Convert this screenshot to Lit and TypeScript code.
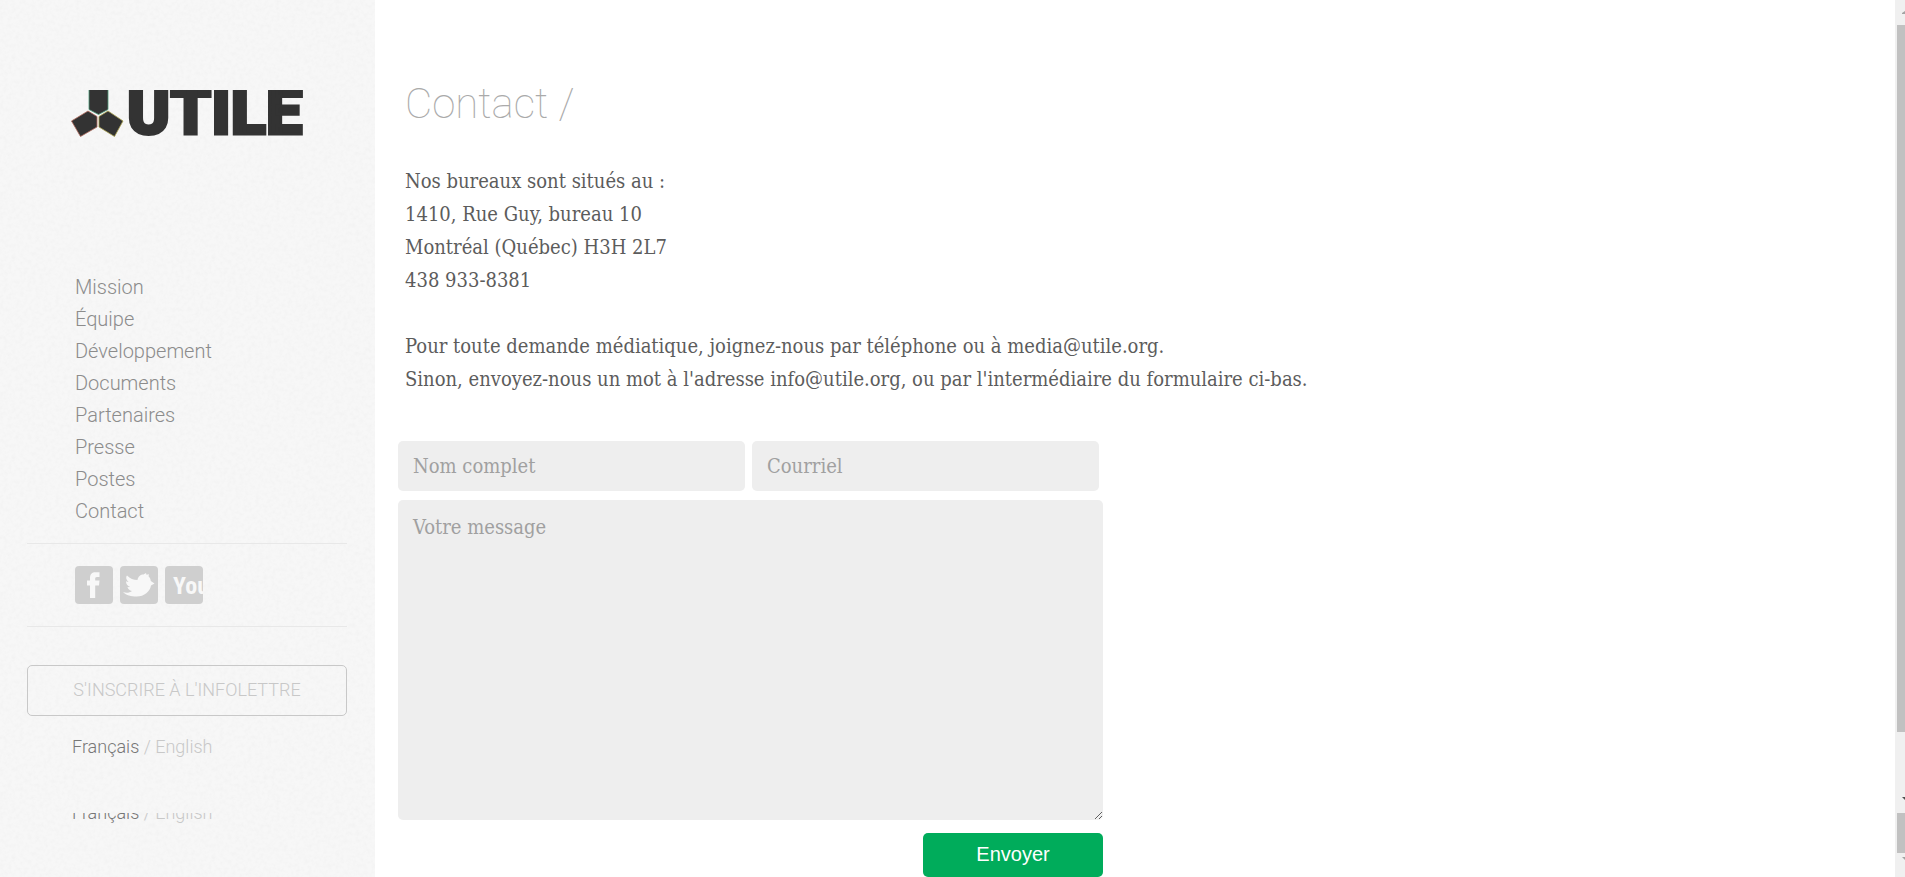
import { LitElement, html, css, svg } from "lit";
import { customElement } from "lit/decorators.js";

const MENU = ["Mission", "Équipe", "Développement", "Documents", "Partenaires", "Presse", "Postes", "Contact"];

@customElement("utile-logo")
class UtileLogo extends LitElement {
  static styles = css`
    :host { display: block; }
    .logo { display: block; width: 232px; height: 48px; overflow: hidden; }
    .word { font: 900 65px Roboto, sans-serif; fill: #333; stroke: #333; stroke-width: 3px; }
  `;
  render() {
    return html`<svg class="logo" viewBox="0 0 232 48" role="img" aria-label="UTILE">
      <path d="M18 -2H37V19.500L27.500 24.500L18 19.500Z" fill="#333" stroke="#4f9a78" stroke-width=".8" />
      <path d="M17 21L26 26.500V37L9.500 46.500L.5 31Z" fill="#333" stroke="#b0695c" stroke-width=".8" />
      <path d="M37 21L28 26.500V37L43.500 46.500L52 31Z" fill="#333" stroke="#a8a04e" stroke-width=".8" />
      <text class="word" x="56" y="44">UTILE</text>
    </svg>`;
  }
}

@customElement("social-links")
class SocialLinks extends LitElement {
  static styles = css`
    :host { display: flex; gap: 7px; }
    .link { display: block; width: 38px; height: 38px; border-radius: 4px; background: #cfcfcf; overflow: hidden; }
    .icon { display: block; width: 38px; height: 38px; fill: #f8f8f8; }
    .you { font: bold 24px "Liberation Sans Narrow", "Roboto Condensed", sans-serif; }
  `;
  render() {
    const items = [
      { name: "Facebook", art: svg`<path d="M15 32V19.500H12V14.500H15V12C15 8 17 6.200 20.500 6.200H24.500V11H22C20.500 11 20.200 11.700 20.200 12.800V14.500H24.500L24 19.500H20.200V32Z" />` },
      { name: "Twitter", art: svg`<path d="M3 26C6 27.200 9.500 27 12 25C9.500 24.500 8 23 7.500 21C8.500 21.200 9.500 21.200 10.200 21C7.500 20 6 18 6 15.300C7 15.800 7.700 16 8.600 16C6 14 5.500 11 7 9.500C10 12.500 13.500 14 17.500 14C18 10.500 20.500 8.500 23.500 8.500L26 7L26.500 8.800L29 8.300L28.500 10.200C29.800 11.300 30.500 13 30.800 15L34.500 17.500L31 19.500C30 25.500 24.500 30.500 16.500 30.500C11 30.500 6.500 29.500 3 26Z" />` },
      { name: "YouTube", art: svg`<text class="you" x="8" y="28">You</text>` },
    ];
    return items.map((i) => html`<a class="link" href="#" aria-label=${i.name}><svg class="icon" viewBox="0 0 38 38">${i.art}</svg></a>`);
  }
}

@customElement("language-switch")
class LanguageSwitch extends LitElement {
  static styles = css`
    :host { display: block; font: 300 18px/24px Roboto, sans-serif; color: #c8c8c8; }
    .lang { color: inherit; text-decoration: none; }
    .current { color: #777; }
  `;
  render() {
    return html`<a class="lang current" href="#">Français</a> / <a class="lang" href="#">English</a>`;
  }
}

@customElement("side-bar")
class SideBar extends LitElement {
  static styles = css`
    :host {
      display: flex; flex-direction: column; box-sizing: border-box; padding: 90px 28px 0 27px;
      background: #f7f7f7 url("data:image/svg+xml,%3Csvg xmlns='http://www.w3.org/2000/svg' width='200' height='200'%3E%3Cfilter id='n'%3E%3CfeTurbulence type='fractalNoise' baseFrequency='.25' numOctaves='2' stitchTiles='stitch'/%3E%3CfeColorMatrix values='0 0 0 0 .5 0 0 0 0 .5 0 0 0 0 .5 .12 0 0 0 -.045'/%3E%3C/filter%3E%3Crect width='200' height='200' filter='url(%23n)'/%3E%3C/svg%3E");
    }
    .brand { margin: 0 0 133px 44px; }
    .menu { list-style: none; margin: 0; padding: 0 48px 16px; font: 300 20px/32px Roboto, sans-serif; }
    .item { color: #8c8c8c; text-decoration: none; }
    .social { border: solid #e8e8e8; border-width: 1px 0; padding: 22px 48px; margin-bottom: 38px; }
    .news {
      box-sizing: border-box; width: 100%; height: 51px; border: 1px solid #c8c8c8; border-radius: 5px;
      background: none; color: #c8c8c8; font: 300 18px/24px Roboto, sans-serif; padding: 0 0 2px; white-space: nowrap;
    }
    .lang { margin: 19px 45px 0; }
    .echo { display: flex; align-items: flex-end; height: 12px; margin: 54px 45px 0; overflow: hidden; }
  `;
  render() {
    return html`
      <utile-logo class="brand"></utile-logo>
      <ul class="menu">${MENU.map((m) => html`<li><a class="item" href="#">${m}</a></li>`)}</ul>
      <div class="social"><social-links></social-links></div>
      <button class="news" type="button">S'INSCRIRE À L'INFOLETTRE</button>
      <language-switch class="lang"></language-switch>
      <div class="echo"><language-switch></language-switch></div>
    `;
  }
}

@customElement("contact-form")
class ContactForm extends LitElement {
  static styles = css`
    :host { display: block; max-width: 705px; }
    .form { display: flex; flex-direction: column; gap: 9px; }
    .row { display: grid; grid-template-columns: 1fr 1fr; gap: 7px; padding-right: 4px; }
    .field {
      box-sizing: border-box; width: 100%; height: 50px; border: 0; border-radius: 5px; margin: 0; padding: 0 15px;
      background: #eee; color: #444; font: 20px/27px "DejaVu Serif Condensed", "DejaVu Serif", serif;
    }
    .area { display: block; height: 320px; padding: 14px 15px; resize: both; }
    .field::placeholder { color: #a0a0a0; opacity: 1; }
    .send {
      align-self: flex-end; width: 180px; height: 44px; margin-top: 4px; border: 0; border-radius: 5px; padding: 0 0 2px;
      background: #00ac5b; color: #fff; font: 20px "Liberation Sans", Arial, sans-serif;
    }
  `;
  render() {
    return html`<form class="form">
      <div class="row">
        <input class="field" type="text" placeholder="Nom complet" aria-label="Nom complet" />
        <input class="field" type="email" placeholder="Courriel" aria-label="Courriel" />
      </div>
      <textarea class="field area" placeholder="Votre message" aria-label="Votre message"></textarea>
      <button class="send" type="button">Envoyer</button>
    </form>`;
  }
}

@customElement("scroll-rail")
class ScrollRail extends LitElement {
  static styles = css`
    :host { display: flex; flex-direction: column; align-items: flex-end; background: #f0f0f0; }
    .thumb { width: 8px; background: #c1c1c1; }
    .long { flex: 1; }
    .short { height: 40px; }
    .cap { display: flex; width: 3px; height: 25px; align-items: center; }
    .gap { height: 81px; align-items: flex-end; }
    .foot { height: 24px; }
    .arrow { display: block; width: 3px; height: 3px; fill: #505050; }
    .low { padding-bottom: 13px; box-sizing: border-box; }
    .dim { fill: #a3a3a3; }
  `;
  render() {
    return html`
      <div class="cap"><svg class="arrow dim" viewBox="0 0 3 3"><path d="M3 0V3H0V2Z" /></svg></div>
      <div class="thumb long"></div>
      <div class="cap gap low"><svg class="arrow" viewBox="0 0 3 3"><path d="M0 0H3V3Z" /></svg></div>
      <div class="thumb short"></div>
      <div class="cap foot low"><svg class="arrow dim" viewBox="0 0 3 3"><path d="M0 0H3V3Z" /></svg></div>
    `;
  }
}

@customElement("app-root")
class AppRoot extends LitElement {
  static styles = css`
    :host { display: grid; grid-template-columns: 375px 1fr 10px; min-height: 100vh; background: #fff; }
    .content { padding: 76px 30px 0 23px; }
    .title { margin: 0 0 33px; padding-left: 7px; font: 100 42px/56px Roboto, sans-serif; color: #aaa; }
    .text { margin: 0 0 33px; padding-left: 7px; font: 20px/33px "DejaVu Serif Condensed", "DejaVu Serif", serif; color: #5c5c5c; }
    .form { margin-top: 45px; }
  `;
  render() {
    return html`
      <side-bar></side-bar>
      <main class="content">
        <h1 class="title">Contact /</h1>
        <p class="text">Nos bureaux sont situés au :<br />1410, Rue Guy, bureau 10<br />Montréal (Québec) H3H 2L7<br />438 933-8381</p>
        <p class="text">Pour toute demande médiatique, joignez-nous par téléphone ou à media@utile.org.<br />Sinon, envoyez-nous un mot à l'adresse info@utile.org, ou par l'intermédiaire du formulaire ci-bas.</p>
        <contact-form class="form"></contact-form>
      </main>
      <scroll-rail></scroll-rail>
    `;
  }
}
